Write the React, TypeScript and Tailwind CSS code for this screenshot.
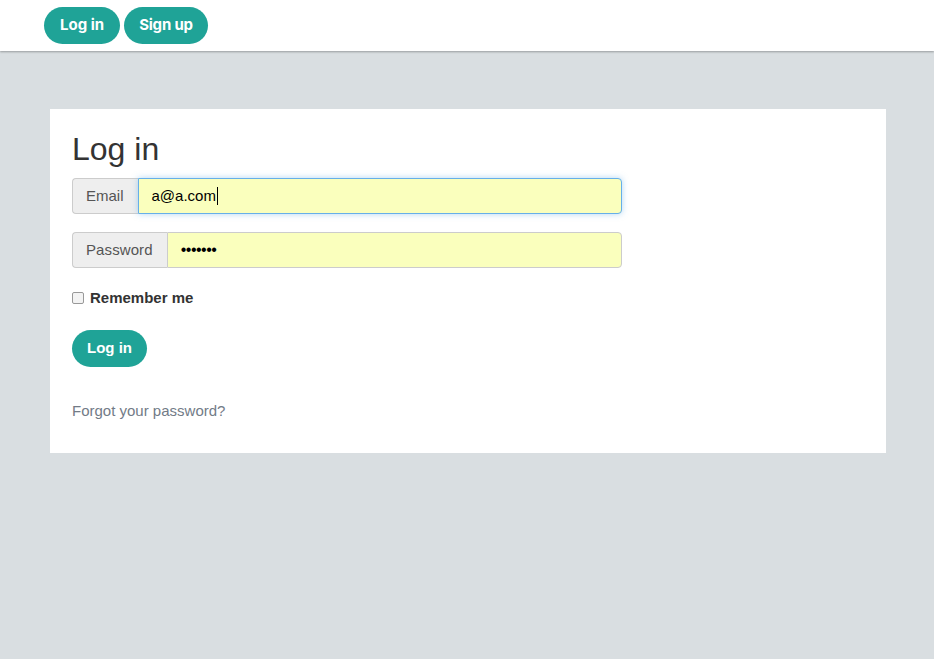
import React from "react";

export default function App() {
  return (
    <div className="min-h-[659px] bg-[#d9dee1] font-['Liberation_Sans',Arial,sans-serif] text-[14px] text-[#333]">
      <header className="h-[51px] bg-white shadow-[0_1px_2px_rgba(0,0,0,0.3)] flex items-center pl-[44px] gap-[4px]">
        <button className="h-[37px] px-[16px] rounded-full bg-[#1fa397] text-white font-bold text-[15px] font-['Inter',sans-serif]">Log in</button>
        <button className="h-[37px] px-[15px] rounded-full bg-[#1fa397] text-white font-bold text-[15px] font-['Inter',sans-serif] tracking-[-0.2px]">Sign up</button>
      </header>
      <div className="pt-[58px] pl-[50px] pr-[48px]">
        <div className="bg-white px-[22px] pt-[20px] pb-[31px]">
          <h1 className="text-[32px] leading-[40px] text-[#333] mb-[9px]">Log in</h1>
          <div className="flex w-[550px] h-[36px] mb-[18px]">
            <span className="flex items-center pl-[13px] pr-[14px] bg-[#eee] border border-[#ccc] border-r-0 rounded-l-[4px] text-[#555] text-[15px]">Email</span>
            <div className="flex-1 flex items-center bg-[#faffbd] border border-[#66afe9] rounded-r-[4px] px-[13px] text-[15px] text-black shadow-[0_0_6px_rgba(102,175,233,0.5)]">
              a@a.com<span className="inline-block w-[1px] h-[18px] bg-black ml-[1px]" />
            </div>
          </div>
          <div className="flex w-[550px] h-[36px] mb-[19px]">
            <span className="flex items-center pl-[13px] pr-[14px] bg-[#eee] border border-[#ccc] border-r-0 rounded-l-[4px] text-[#555] text-[15px] tracking-[0.1px]">Password</span>
            <div className="flex-1 flex items-center bg-[#faffbd] border border-[#ccc] rounded-r-[4px] px-[13px] text-[16px] text-black tracking-[-0.5px]">
              •••••••
            </div>
          </div>
          <label className="flex items-center gap-[6px] mb-[20px]">
            <span className="w-[12px] h-[12px] rounded-[2px] border border-[#999] bg-[#f3f3f3]" />
            <span className="font-bold text-[15px] text-[#333]">Remember me</span>
          </label>
          <button className="h-[37px] px-[15px] rounded-full bg-[#1fa397] text-white font-bold text-[15px]">Log in</button>
          <div className="mt-[33px] text-[15px] text-[#727b87]">Forgot your password?</div>
        </div>
      </div>
    </div>
  );
}
